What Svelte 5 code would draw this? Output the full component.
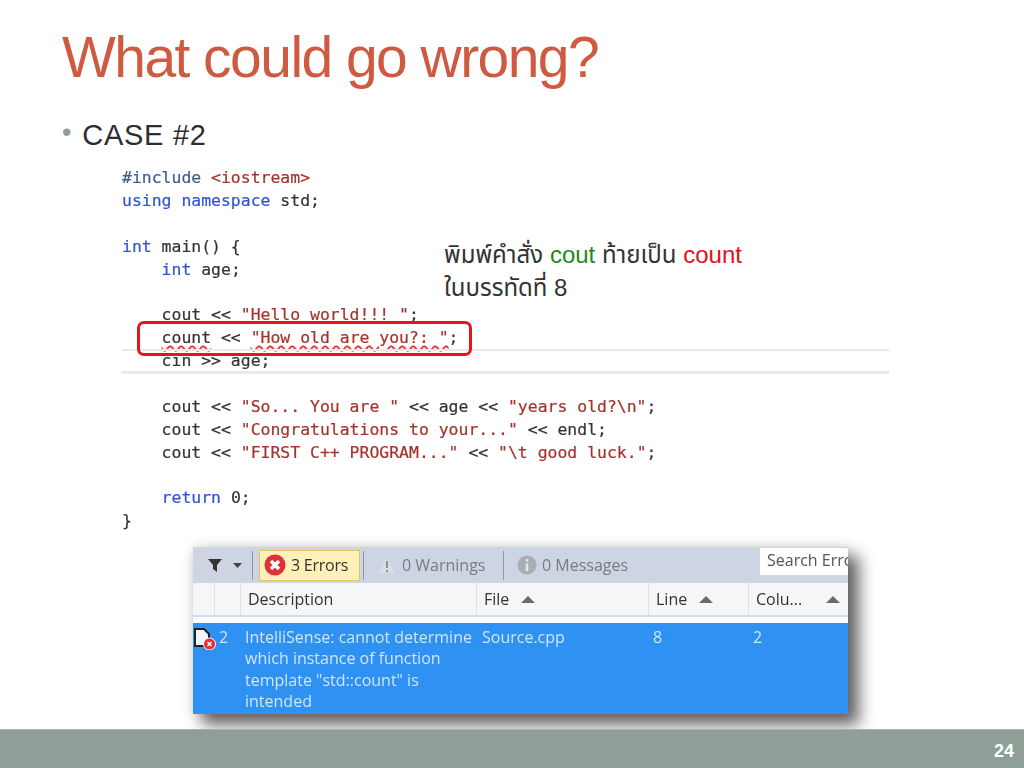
<script>
  // code lines of the screenshot inside the slide
  const columns = [
    { label: 'Description', sort: false },
    { label: 'File', sort: true },
    { label: 'Line', sort: true },
    { label: 'Colu...', sort: true }
  ];
</script>

<div class="slide">
  <h1>What could go wrong?</h1>

  <div class="bullet"><span class="dot">•</span><span>CASE #2</span></div>

  <div class="code-wrap">
    <pre class="code"><span class="inc">#include</span> <span class="str">&lt;iostream&gt;</span>
<span class="kw">using namespace</span> std;

<span class="kw">int</span> main() &#123;
    <span class="kw">int</span> age;

    cout &lt;&lt; <span class="str">"Hello world!!! "</span>;
    <span class="bad">count</span> &lt;&lt; <span class="bad str">"How old are you?: "</span>;
    cin &gt;&gt; age;

    cout &lt;&lt; <span class="str">"So... You are "</span> &lt;&lt; age &lt;&lt; <span class="str">"years old?\n"</span>;
    cout &lt;&lt; <span class="str">"Congratulations to your..."</span> &lt;&lt; endl;
    cout &lt;&lt; <span class="str">"FIRST C++ PROGRAM..."</span> &lt;&lt; <span class="str">"\t good luck."</span>;

    <span class="kw">return</span> 0;
&#125;</pre>
    <div class="line-highlight"></div>
    <div class="red-box"></div>
    <div class="callout">
      <div>พิมพ์คำสั่ง <span class="green">cout</span> ท้ายเป็น <span class="red">count</span></div>
      <div>ในบรรทัดที่ 8</div>
    </div>
  </div>

  <div class="panel">
    <div class="toolbar">
      <svg class="funnel" width="14" height="14" viewBox="0 0 14 14"><path d="M0 1h14L9 7v7L5 11V7z" fill="#333" /></svg>
      <svg class="caret" width="9" height="5" viewBox="0 0 9 5"><path d="M0 0h9L4.5 5z" fill="#444" /></svg>
      <span class="sep"></span>
      <div class="filter active">
        <svg width="22" height="22" viewBox="0 0 22 22">
          <circle cx="11" cy="11" r="10.500" fill="#e0303a" />
          <path d="M7 7l8 8M15 7l-8 8" stroke="#fff" stroke-width="3.500" />
        </svg>
        <span>3 Errors</span>
      </div>
      <span class="sep"></span>
      <div class="filter muted warn">
        <svg width="20" height="18" viewBox="0 0 20 18">
          <path d="M10 1l8 16H2z" fill="#d9dde5" />
          <path d="M10 5v7M10 14v2" stroke="#8d9096" stroke-width="2" />
        </svg>
        <span>0 Warnings</span>
      </div>
      <span class="sep"></span>
      <div class="filter muted">
        <svg width="20" height="20" viewBox="0 0 20 20">
          <circle cx="10" cy="10" r="9.500" fill="#a9adb4" />
          <path d="M10 4v2.500M10 8.500V16" stroke="#e6e8ec" stroke-width="2.500" />
        </svg>
        <span>0 Messages</span>
      </div>
      <div class="search">Search Erro</div>
    </div>

    <div class="head">
      <div class="cell"></div>
      <div class="cell"></div>
      {#each columns as col}
        <div class="cell">
          <span>{col.label}</span>
          {#if col.sort}
            <svg width="14" height="7" viewBox="0 0 14 7"><path d="M7 0l7 7H0z" fill="#6b6b6b" /></svg>
          {/if}
        </div>
      {/each}
    </div>

    <div class="spacer"></div>

    <div class="row">
      <div class="icon-cell">
        <svg width="24" height="26" viewBox="0 0 24 26">
          <path d="M2 5h9l5 5v12H2z" fill="#f4f6fa" stroke="#222" stroke-width="2" />
          <circle cx="16.500" cy="20" r="6" fill="#e0303a" stroke="#fff" />
          <path d="M14.500 18l4 4M18.500 18l-4 4" stroke="#fff" stroke-width="1.500" />
        </svg>
      </div>
      <div class="num">2</div>
      <div class="desc">IntelliSense: cannot determine which instance of function template "std::count" is intended</div>
      <div>Source.cpp</div>
      <div>8</div>
      <div>2</div>
    </div>
  </div>

  <footer><span>24</span></footer>
</div>

<style>
  :global(body) {
    margin: 0;
    background: #fff;
  }

  .slide {
    width: 1024px;
    height: 768px;
    display: flex;
    flex-direction: column;
    overflow: hidden;
    font-family: "Liberation Sans", Arial, sans-serif;
    color: #333;
  }

  h1 {
    margin: 25px 0 0 62px;
    font-size: 57px;
    line-height: 64px;
    font-weight: 400;
    letter-spacing: -1.55px;
    color: #cf5a42;
  }

  .bullet {
    margin: 30px 0 0 62px;
    display: flex;
    gap: 10px;
    font-size: 29px;
    line-height: 32px;
    letter-spacing: 0.75px;
    color: #2e2e2e;
  }

  .dot {
    color: #8f9e96;
    font-size: 27px;
    line-height: 26px;
  }

  .code-wrap {
    position: relative;
    margin: 16px 0 0 122px;
    width: 767px;
    height: 380px;
  }

  .code {
    margin: 0;
    font-family: "DejaVu Sans Mono", monospace;
    font-size: 16.45px;
    line-height: 22.87px;
    color: #333;
    -webkit-text-stroke: 0.2px;
    filter: blur(0.35px);
  }

  .kw {
    color: #2f55d4;
  }

  .inc {
    color: #3f5c8f;
  }

  .str {
    color: #a5332c;
  }

  .bad {
    text-decoration: underline wavy #e0392f 1.5px;
    text-underline-offset: 2px;
  }

  .line-highlight {
    position: absolute;
    left: 0;
    right: 0;
    top: 182px;
    height: 20px;
    border-top: 2px solid #e9e9e9;
    border-bottom: 3px solid #e9e9e9;
  }

  .red-box {
    position: absolute;
    left: 15px;
    top: 154px;
    width: 335px;
    height: 35px;
    box-sizing: border-box;
    border: 3px solid #e8141c;
    border-radius: 7px;
  }

  .callout {
    position: absolute;
    left: 322px;
    top: 71px;
    font-family: "Liberation Sans", "Noto Sans Thai", "DejaVu Sans", sans-serif;
    font-size: 24px;
    line-height: 33px;
    color: #333;
    white-space: nowrap;
  }

  .green {
    color: #1a8a1a;
  }

  .red {
    color: #e0101c;
  }

  .panel {
    margin: 0 0 0 193px;
    width: 655px;
    height: 167px;
    flex: none;
    background: #fff;
    box-shadow: 10px 10px 15px 1px rgba(0, 0, 0, 0.6), 0 0 12px rgba(0, 0, 0, 0.12);
    font-family: "Open Sans", sans-serif;
    font-size: 16px;
    color: #333;
  }

  .toolbar {
    height: 36px;
    background: #cdd5e3;
    display: flex;
    align-items: center;
    position: relative;
    filter: blur(0.3px);
  }

  .funnel {
    margin-left: 15px;
  }

  .caret {
    margin: 0 10px 0 11px;
  }

  .sep {
    width: 1px;
    height: 29px;
    background: #8f96a3;
  }

  .filter {
    display: flex;
    align-items: center;
    gap: 5px;
    height: 31px;
    padding: 0 5px;
    margin: 0 5px;
    white-space: nowrap;
  }

  .filter.active {
    background: #fdf0b8;
    border: 1px solid #e5c365;
    box-sizing: border-box;
    width: 101px;
    margin: 0 3px 0 6px;
    gap: 5px;
    padding: 0 4px;
    letter-spacing: -0.25px;
  }

  .filter.muted {
    color: #777c85;
    margin: 0 4px 0 8px;
  }

  .filter.warn {
    width: 130px;
    box-sizing: border-box;
    margin-right: 1px;
  }

  .search {
    position: absolute;
    left: 567px;
    right: 0;
    top: 1px;
    height: 27px;
    padding-left: 7px;
    background: #fff;
    color: #555;
    line-height: 25px;
    white-space: nowrap;
    overflow: hidden;
  }

  .head {
    height: 34px;
    display: grid;
    grid-template-columns: 22px 26px 236px 172px 100px 99px;
    background: #f5f6f8;
    border-bottom: 2px solid #d6dbe5;
    box-sizing: border-box;
    filter: blur(0.3px);
  }

  .cell {
    display: flex;
    align-items: center;
    justify-content: flex-start;
    gap: 12px;
    padding-left: 7px;
    border-right: 1px solid #dde0e6;
  }

  .cell:last-child {
    gap: 24px;
    border-right: none;
  }

  .spacer {
    height: 6px;
  }

  .row {
    height: 91px;
    display: grid;
    grid-template-columns: 22px 26px 236px 172px 100px 99px;
    background: #2f92f2;
    color: #cfe6fb;
    line-height: 21.4px;
    padding-top: 4px;
    box-sizing: border-box;
    filter: blur(0.3px);
  }

  .icon-cell svg {
    display: block;
    margin-top: -3px;
  }

  .num {
    padding-left: 4px;
  }

  .desc {
    padding: 0 0 0 4px;
  }

  .row > div:nth-child(n + 4) {
    padding-left: 5px;
  }

  .row > div:nth-child(n + 5) {
    padding-left: 4px;
  }

  footer {
    margin-top: auto;
    height: 39px;
    box-sizing: border-box;
    background: #8f9e96;
    border-top: 1px solid #a9b2aa;
    display: flex;
    align-items: center;
    justify-content: flex-end;
    padding: 5px 10px 0 0;
    font-size: 18px;
    font-weight: 700;
    color: #fff;
  }
</style>
